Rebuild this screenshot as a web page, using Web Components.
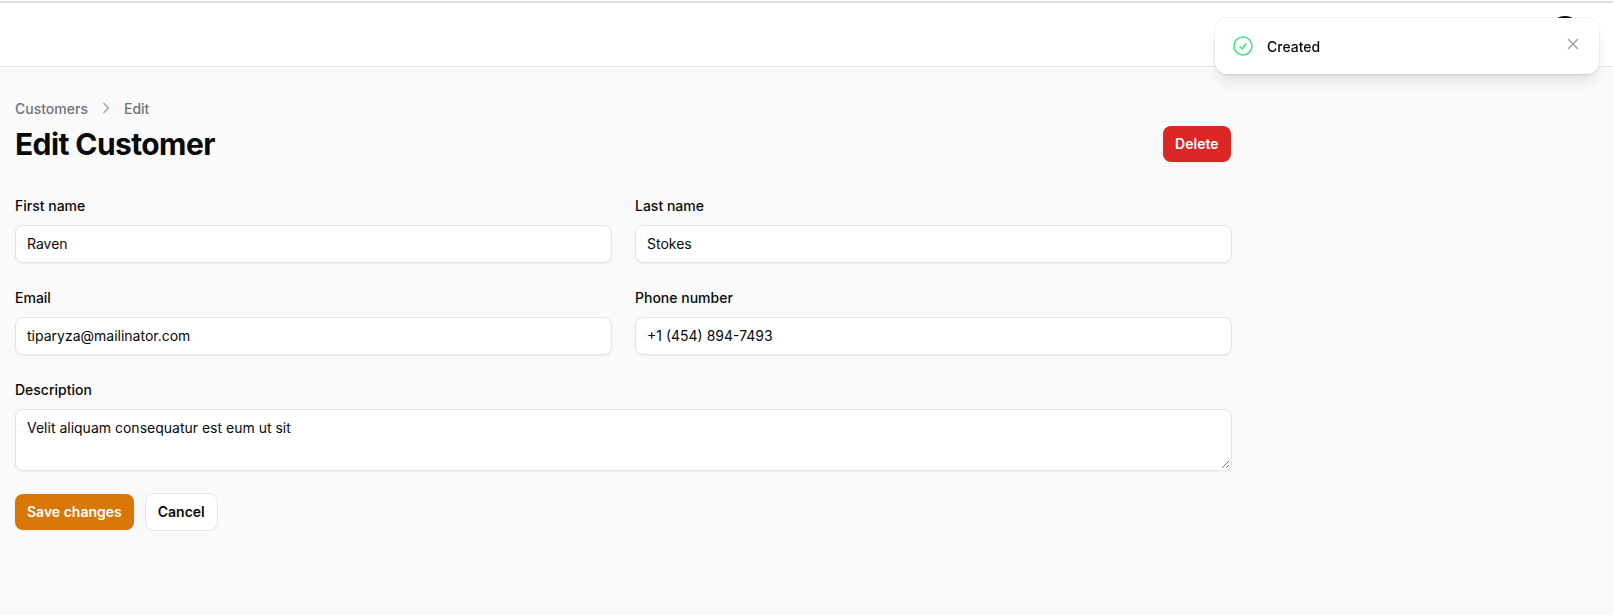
<!DOCTYPE html>
<html lang="en">
<head>
<meta charset="utf-8">
<title>Edit Customer</title>
<style>
  html, body { margin: 0; height: 100%; }
  body {
    background: #fafafa;
    color: #09090b;
    font-family: Inter, "Liberation Sans", sans-serif;
    font-size: 14px;
    overflow: hidden;
  }
</style>
</head>
<body>
<app-topbar></app-topbar>
<app-toast>Created</app-toast>
<edit-page>
  <bread-crumbs slot="crumbs"></bread-crumbs>
  <span slot="title">Edit Customer</span>
  <app-button slot="action" variant="danger">Delete</app-button>
  <form-field label="First name">Raven</form-field>
  <form-field label="Last name">Stokes</form-field>
  <form-field label="Email">tiparyza@mailinator.com</form-field>
  <form-field label="Phone number">+1 (454) 894-7493</form-field>
  <form-field label="Description" multiline>Velit aliquam consequatur est eum ut sit</form-field>
  <app-button slot="buttons" variant="primary">Save changes</app-button>
  <app-button slot="buttons">Cancel</app-button>
</edit-page>

<script>
class AppTopbar extends HTMLElement {
  constructor() {
    super();
    this.attachShadow({ mode: "open" });
    this.shadowRoot.innerHTML = `
      <style>
        :host {
          display: flex;
          justify-content: flex-end;
          box-sizing: border-box;
          height: 66px;
          padding: 16px 32px 0 0;
          background: #fff;
          border-top: 2px solid #e0e0e2;
          border-bottom: 1px solid #e6e6e7;
          margin-top: 1px;
        }
        .avatar { width: 32px; height: 32px; border-radius: 50%; background: #111; margin-top: -3px; }
      </style>
      <div class="avatar"></div>
    `;
  }
}

class AppToast extends HTMLElement {
  constructor() {
    super();
    this.attachShadow({ mode: "open" });
    this.shadowRoot.innerHTML = `
      <style>
        :host {
          position: fixed;
          top: 18px;
          left: 1215px;
          width: 384px;
          height: 56px;
          box-sizing: border-box;
          display: flex;
          align-items: center;
          gap: 12px;
          padding: 0 16px;
          background: #fff;
          border-radius: 12px;
          box-shadow: 0 10px 15px -3px rgba(0,0,0,.1), 0 4px 6px -4px rgba(0,0,0,.1), 0 0 0 1px rgba(9,9,11,.05);
          font-size: 14px;
          font-weight: 500;
          color: #09090b;
        }
        .text { flex: 1; }
        svg { display: block; flex: none; }
        .close { margin-top: -4px; }
      </style>
      <svg width="24" height="24" viewBox="0 0 24 24" fill="none" stroke="#4ade80" stroke-width="1.5" stroke-linecap="round" stroke-linejoin="round">
        <circle cx="12" cy="12" r="9"/>
        <path d="M9 12.75 11.25 15 15 9.75"/>
      </svg>
      <span class="text"><slot></slot></span>
      <svg class="close" width="20" height="20" viewBox="0 0 20 20" fill="none" stroke="#a1a1aa" stroke-width="1.5" stroke-linecap="round">
        <path d="M5.5 5.5l9 9M14.5 5.5l-9 9"/>
      </svg>
    `;
  }
}

class BreadCrumbs extends HTMLElement {
  constructor() {
    super();
    this.attachShadow({ mode: "open" });
    this.shadowRoot.innerHTML = `
      <style>
        :host {
          display: flex;
          align-items: center;
          gap: 8px;
          height: 20px;
          font-size: 14px;
          font-weight: 500;
          color: #71717a;
        }
        svg { display: block; }
      </style>
      <span>Customers</span>
      <svg width="20" height="20" viewBox="0 0 20 20" fill="none" stroke="#a1a1aa" stroke-width="1.5" stroke-linecap="round" stroke-linejoin="round">
        <path d="M8 5.5 12.5 10 8 14.5"/>
      </svg>
      <span>Edit</span>
    `;
  }
}

class AppButton extends HTMLElement {
  constructor() {
    super();
    this.attachShadow({ mode: "open" });
    this.shadowRoot.innerHTML = `
      <style>
        :host {
          display: inline-flex;
          align-items: center;
          justify-content: center;
          box-sizing: border-box;
          height: 36px;
          padding: 0 12px;
          border-radius: 8px;
          font-size: 14px;
          font-weight: 600;
          line-height: 20px;
          color: #09090b;
          background: #fff;
          box-shadow: 0 0 0 1px #e4e4e7, 0 1px 2px rgba(0,0,0,.05);
        }
        :host([variant="primary"]) { background: #d97706; color: #fff; box-shadow: 0 1px 2px rgba(0,0,0,.05); }
        :host([variant="danger"]) { background: #dc2626; color: #fff; box-shadow: 0 1px 2px rgba(0,0,0,.05); padding: 0 12.5px; }
      </style>
      <slot></slot>
    `;
  }
}

class FormField extends HTMLElement {
  constructor() {
    super();
    this.attachShadow({ mode: "open" });
    this.shadowRoot.innerHTML = `
      <style>
        :host { display: flex; flex-direction: column; gap: 9px; }
        :host([multiline]) { grid-column: 1 / -1; }
        label { font-size: 14px; font-weight: 500; line-height: 20px; color: #09090b; }
        .box {
          position: relative;
          box-sizing: border-box;
          height: 38px;
          padding: 8px 11px;
          background: #fff;
          border: 1px solid #e4e4e7;
          border-radius: 8px;
          box-shadow: 0 1px 2px rgba(0,0,0,.05);
          font-size: 14px;
          line-height: 20px;
          color: #09090b;
        }
        :host([multiline]) .box { height: 62px; }
        svg { display: none; position: absolute; right: 1px; bottom: 1px; }
        :host([multiline]) svg { display: block; }
      </style>
      <label></label>
      <div class="box">
        <slot></slot>
        <svg width="9" height="9" viewBox="0 0 9 9" stroke="#777" stroke-width="1" fill="none">
          <path d="M1 8 8 1M5 8 8 5"/>
        </svg>
      </div>
    `;
    this.shadowRoot.querySelector("label").textContent = this.getAttribute("label");
  }
}

class EditPage extends HTMLElement {
  constructor() {
    super();
    this.attachShadow({ mode: "open" });
    this.shadowRoot.innerHTML = `
      <style>
        :host { display: block; box-sizing: border-box; width: 1232px; padding: 31px 0 0 15px; }
        .head { display: flex; justify-content: space-between; align-items: center; margin-top: 8px; padding-right: 1px; }
        h1 {
          margin: 0;
          font-size: 30px;
          line-height: 36px;
          font-weight: 700;
          letter-spacing: -0.6px;
          color: #09090b;
        }
        .grid { display: grid; grid-template-columns: 1fr 1fr; column-gap: 23px; row-gap: 25px; margin-top: 34px; }
        .buttons { display: flex; gap: 12px; margin-top: 23px; }
      </style>
      <slot name="crumbs"></slot>
      <div class="head">
        <h1><slot name="title"></slot></h1>
        <slot name="action"></slot>
      </div>
      <div class="grid"><slot></slot></div>
      <div class="buttons"><slot name="buttons"></slot></div>
    `;
  }
}

customElements.define("app-topbar", AppTopbar);
customElements.define("app-toast", AppToast);
customElements.define("bread-crumbs", BreadCrumbs);
customElements.define("app-button", AppButton);
customElements.define("form-field", FormField);
customElements.define("edit-page", EditPage);
</script>
</body>
</html>
